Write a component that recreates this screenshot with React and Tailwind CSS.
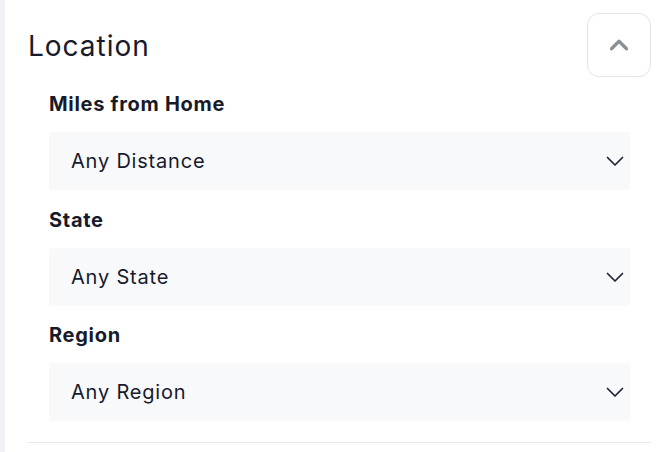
import React from "react";

function ChevronDown() {
  return (
    <svg width="24" height="24" viewBox="0 0 24 24" fill="none" stroke="#1f2333" strokeWidth="1.7" strokeLinecap="round" strokeLinejoin="round">
      <path d="M4.5 8.5l7.5 7.5 7.5-7.5" />
    </svg>
  );
}

function Field({ label, value }) {
  return (
    <div className="flex flex-col">
      <div className="text-[20px] leading-[28px] font-bold text-[#171a2b] h-[42px] flex items-start tracking-[0.035em]">{label}</div>
      <div className="h-[58px] w-[581px] bg-[#f8f9fb] rounded-[2px] flex items-center justify-between pl-[22px] pr-[3px] text-[20px] text-[#171a2b] tracking-[0.04em]">
        <span>{value}</span>
        <ChevronDown />
      </div>
    </div>
  );
}

export default function App() {
  return (
    <div className="w-[664px] h-[452px] bg-white flex overflow-hidden" style={{ fontFamily: "Inter, 'Noto Sans', sans-serif" }}>
      <div className="w-[5px] bg-[#f1f2f5] shrink-0" />
      <div className="flex-1 pl-[23px] pr-[13px]">
        <div className="flex justify-between pt-[13px]">
          <h2 className="text-[28px] leading-[36px] text-[#171a2b] mt-[15px] font-normal tracking-[0.035em]">Location</h2>
          <button className="w-[64px] h-[64px] rounded-[12px] border border-[#e3e5ea] flex items-center justify-center">
            <svg width="30" height="30" viewBox="0 0 24 24" fill="none" stroke="#8b9098" strokeWidth="2.6" strokeLinecap="round" strokeLinejoin="round">
              <path d="M6 15l6-6 6 6" />
            </svg>
          </button>
        </div>
        <div className="pl-[21px] flex flex-col gap-[15.5px] mt-[13px]">
          <Field label="Miles from Home" value="Any Distance" />
          <Field label="State" value="Any State" />
          <Field label="Region" value="Any Region" />
        </div>
        <div className="mt-[21px] h-px bg-[#e5e7eb]" />
      </div>
    </div>
  );
}
